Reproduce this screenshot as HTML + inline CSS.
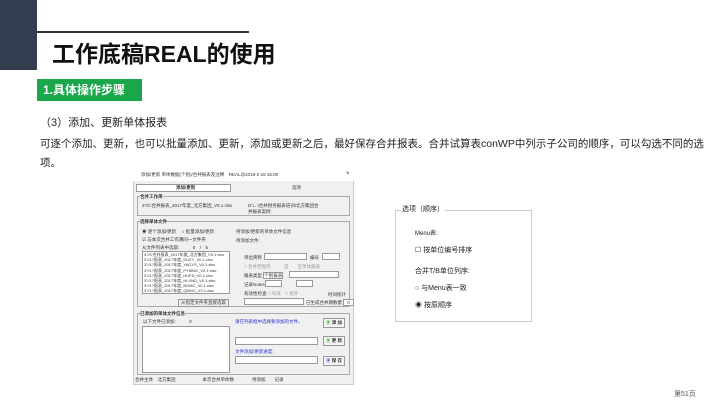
<!DOCTYPE html>
<html><head><meta charset="utf-8"><style>
*{margin:0;padding:0;box-sizing:border-box}
body{width:720px;height:405px;background:#fff;position:relative;overflow:hidden;font-family:"Liberation Sans","Noto Sans CJK SC",sans-serif;color:#222}
.a{position:absolute;white-space:nowrap}
.d{font-size:4.5px;color:#333}
.box{position:absolute;border:1px solid #aaa}
.w{position:absolute;background:#fff;border:1px solid #999}
</style></head><body>
<div class="a" style="left:0;top:0;width:37px;height:70px;background:#333d4f"></div>
<div class="a" style="left:37px;top:31px;width:212px;height:2px;background:#333"></div>
<div class="a" style="left:52px;top:35px;font-size:23px;font-weight:bold;color:#111">工作底稿REAL的使用</div>
<div class="a" style="left:37px;top:79px;width:105px;height:22px;background:#1aa64b;color:#fff;font-size:12px;font-weight:bold;line-height:22px;padding-left:6px">1.具体操作步骤</div>
<div class="a" style="left:40px;top:114px;font-size:11px;color:#222">（3）添加、更新单体报表</div>
<div class="a" style="left:40px;top:136px;font-size:10.5px;color:#222">可逐个添加、更新，也可以批量添加、更新，添加或更新之后，最好保存合并报表。合并试算表conWP中列示子公司的顺序，可以勾选不同的选</div>
<div class="a" style="left:40px;top:155px;font-size:10.5px;color:#222">项。</div>

<div class="a" style="left:133px;top:168px;width:221px;height:217px;background:#f0f0f0;border:1px solid #ccc"></div>
<div class="a" style="left:133px;top:168px;width:221px;height:13px;background:#fff"></div>
<div class="a d" style="left:141px;top:172px">添加/更新 单体数据(个别)/合并报表及注释　REAL@2018-2-15 15:00</div>
<div class="a d" style="left:346px;top:171px;font-size:6px">×</div>
<div class="a" style="left:136px;top:184px;width:95px;height:8px;border:1px solid #999;background:#fff"></div>
<div class="a d" style="left:176px;top:185px;font-weight:bold">添加/更新</div>
<div class="a d" style="left:292px;top:185px">选项</div>
<div class="box" style="left:137px;top:196px;width:213px;height:20px"></div>
<div class="a d" style="left:140px;top:194px;background:#f0f0f0;font-weight:bold">合并工作薄</div>
<div class="a d" style="left:142px;top:203px">3?/C合并报表_2017年度_北方集团_V0.1.xlsx</div>
<div class="a d" style="left:248px;top:203px">D:\...\合并财务报表培训\北方集团合<br>并报表案例</div>
<div class="box" style="left:137px;top:221px;width:213px;height:86px"></div>
<div class="a d" style="left:140px;top:219px;background:#f0f0f0;font-weight:bold">选择单体文件</div>
<div class="a d" style="left:142px;top:229px">◉ 逐个添加/更新　 ○ 批量添加/更新</div>
<div class="a d" style="left:236px;top:229px">待添加/更新的单体文件信息</div>
<div class="a d" style="left:142px;top:237px">☑ 与本次合并工作薄同一文件夹</div>
<div class="a d" style="left:236px;top:238px">待添加文件:</div>
<div class="a d" style="left:142px;top:245px">从文件列表中选取:　　　0　/　6</div>
<div class="w" style="left:142px;top:251px;width:88px;height:43px"></div>
<div class="a d" style="left:144px;top:252px;line-height:5.2px;font-size:4px">3?/C合并报表_2017年度_北方集团_V0.1.xlsx<br>3?/1?报表_2017年度_DUZY_V0.1.xlsx<br>3?/1?报表_2017年度_YAGYS_V0.1.xlsx<br>3?/1?报表_2017年度_PYMNG_V0.1.xlsx<br>3?/1?报表_2017年度_HUFD_V0.1.xlsx<br>3?/1?报表_2017年度_HLXND_V0.1.xlsx<br>3?/1?报表_2017年度_BGMC_V0.1.xlsx<br>3?/1?报表_2017年度_QMHC_V0.1.xlsx</div>
<div class="a d" style="left:178px;top:299px;border:1px solid #999;padding:0 2px">从指定文件夹直接选取</div>
<div class="a d" style="left:244px;top:255px">单位简称</div><div class="w" style="left:264px;top:253px;width:43px;height:7px"></div>
<div class="a d" style="left:310px;top:255px">编号</div><div class="w" style="left:322px;top:253px;width:18px;height:7px"></div>
<div class="a d" style="left:244px;top:264px;color:#999">□ 合并范围内　　　自　　至单体报表</div>
<div class="a d" style="left:244px;top:273px">报表类型 <span style="border:1px solid #999;background:#fff">个别报表</span></div><div class="w" style="left:289px;top:271px;width:50px;height:7px"></div>
<div class="a d" style="left:244px;top:282px">记录Notes</div><div class="w" style="left:265px;top:280px;width:17px;height:7px"></div><div class="w" style="left:296px;top:280px;width:17px;height:7px"></div>
<div class="a d" style="left:244px;top:291px">有效性检查 <span style="color:#999">□ 有效　□ 拒开</span></div>
<div class="a d" style="left:328px;top:292px">时间统计</div>
<div class="w" style="left:244px;top:298px;width:60px;height:7px"></div>
<div class="a d" style="left:306px;top:300px">已生成合并期数量 <span style="border:1px solid #999;background:#fff;padding:0 3px">0</span></div>
<div class="box" style="left:137px;top:313px;width:213px;height:62px"></div>
<div class="a d" style="left:140px;top:311px;background:#f0f0f0;font-weight:bold">已添加的单体文件信息</div>
<div class="a d" style="left:143px;top:319px">以下文件已添加:　　　0</div>
<div class="w" style="left:142px;top:326px;width:88px;height:47px"></div>
<div class="a d" style="left:235px;top:319px;color:#2233cc">请在列表框中选择要添加的文件。</div>
<div class="w" style="left:235px;top:337px;width:83px;height:8px"></div>
<div class="a d" style="left:235px;top:349px;color:#2233cc">文件添加/更新进度:</div>
<div class="w" style="left:235px;top:356px;width:83px;height:8px"></div>
<div class="a d" style="left:323px;top:318px;border:1px solid #999;padding:1px 2px;background:#f5f5f5;font-weight:bold"><span style="color:#2a2">▣</span> 添 加</div>
<div class="a d" style="left:323px;top:336px;border:1px solid #999;padding:1px 2px;background:#f5f5f5;font-weight:bold"><span style="color:#2a2">▣</span> 更 新</div>
<div class="a d" style="left:323px;top:356px;border:1px solid #999;padding:1px 2px;background:#f5f5f5;font-weight:bold"><span style="color:#23a">▣</span> 保 存</div>
<div class="a d" style="left:135px;top:377px">合并主体　北方集团　　　　　　本次合并单体数　　　　待添加　　记录</div>

<div class="a" style="left:395px;top:210px;width:137px;height:112px;border:1px solid #ccc"></div>
<div class="a" style="left:401px;top:204px;background:#fff;font-size:7px;padding:0 1px">选项（顺序）</div>
<div class="a" style="left:415px;top:228px;font-size:6px">Menu表:</div>
<div class="a" style="left:415px;top:245px;font-size:7px">☐ 按单位编号排序</div>
<div class="a" style="left:415px;top:266px;font-size:7px">合并T/B单位列序:</div>
<div class="a" style="left:415px;top:283px;font-size:7px">○ 与Menu表一致</div>
<div class="a" style="left:415px;top:300px;font-size:7px">◉ 按原顺序</div>
<div class="a" style="left:674px;top:389px;font-size:7px;color:#555">第51页</div>
</body></html>
